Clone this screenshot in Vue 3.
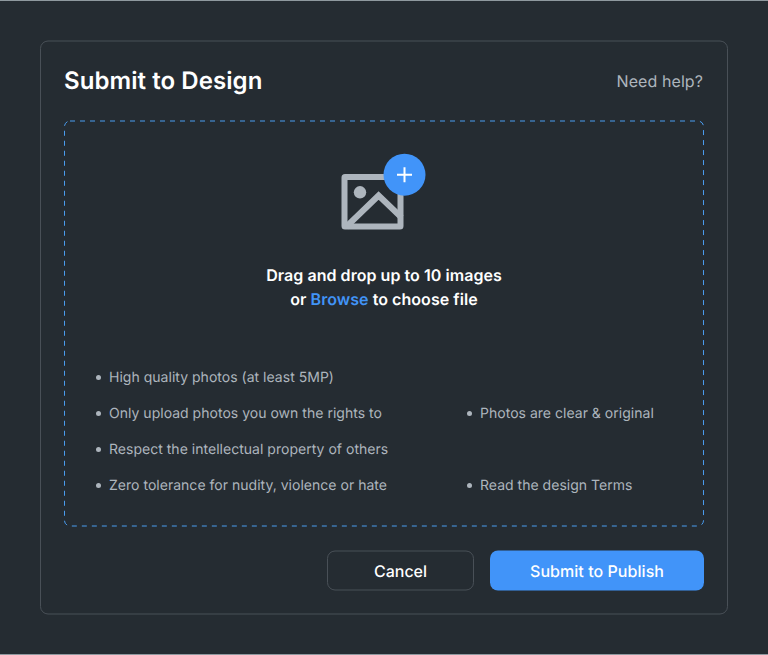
<script setup>
const rules = [
  ['High quality photos (at least 5MP)', ''],
  ['Only upload photos you own the rights to', 'Photos are clear & original'],
  ['Respect the intellectual property of others', ''],
  ['Zero tolerance for nudity, violence or hate', 'Read the design Terms'],
]
</script>

<template>
  <main class="page">
    <section class="card">
      <svg class="outline" width="688" height="575" viewBox="0 0 688 575" aria-hidden="true">
        <rect x="0.5" y="1" width="687" height="573" rx="7.5" fill="none" stroke="#495057" />
      </svg>
      <header class="head">
        <h1 class="title">Submit to Design</h1>
        <a class="help">Need help?</a>
      </header>

      <div class="drop">
        <svg class="outline" width="640" height="407" viewBox="0 0 640 407" aria-hidden="true">
          <rect x="0.5" y="1" width="639" height="405" rx="5.5" fill="none" stroke="#4a9df0" stroke-dasharray="5 5" />
        </svg>
        <svg class="picture" width="86" height="78" viewBox="0 0 86 78" aria-hidden="true">
          <rect x="4.5" y="24" width="56" height="49.5" rx="0.5" fill="none" stroke="#adb5bd" stroke-width="6" />
          <circle cx="20" cy="39.3" r="6.2" fill="#adb5bd" />
          <path d="M6 74L38.6 42.5L61.5 64.5" fill="none" stroke="#adb5bd" stroke-width="6" />
          <circle cx="64.5" cy="21.7" r="21" fill="#4194f9" />
          <path d="M64.5 14.2v15M57 21.7h15" stroke="#fff" stroke-width="2" />
        </svg>
        <p class="prompt">Drag and drop up to 10 images<br />or <a class="browse">Browse</a> to choose file</p>
        <div class="rules">
          <template v-for="(row, i) in rules" :key="i">
            <div v-for="(text, j) in row" :key="j" class="rule">
              <template v-if="text"><i class="dot"></i><span>{{ text }}</span></template>
            </div>
          </template>
        </div>
      </div>

      <footer class="actions">
        <button class="btn cancel">
          <svg class="outline" width="147" height="41" viewBox="0 0 147 41" aria-hidden="true">
            <rect x="0.5" y="1" width="146" height="39" rx="7.5" fill="none" stroke="#495057" />
          </svg>
          <span class="label">Cancel</span>
        </button>
        <button class="btn submit">
          <svg class="outline" width="214" height="41" viewBox="0 0 214 41" aria-hidden="true">
            <rect y="0.5" width="214" height="40" rx="8" fill="#4194f9" />
          </svg>
          <span class="label">Submit to Publish</span>
        </button>
      </footer>
    </section>
  </main>
</template>

<style>
body {
  margin: 0;
  background: #252c32;
}
</style>

<style scoped>
.page {
  box-sizing: border-box;
  width: 768px;
  height: 655px;
  padding: 39px 40px;
  border-top: 1px solid #8f999f;
  border-bottom: 1px solid #8f999f;
  background: #252c32;
  font-family: Inter, sans-serif;
  text-rendering: geometricPrecision;
  color: #fff;
}
.card {
  position: relative;
  box-sizing: border-box;
  height: 575px;
  padding: 24px;
}
.outline {
  position: absolute;
  top: 0;
  left: 0;
  display: block;
}
.head {
  display: flex;
  justify-content: space-between;
  align-items: center;
  height: 33px;
}
.title {
  margin: 0;
  font-size: 24px;
  line-height: 33px;
  font-weight: 600;
  letter-spacing: 0.07px;
}
.help {
  margin-right: 1px;
  font-size: 16px;
  line-height: 24px;
  letter-spacing: 0.08px;
  color: #adb5bd;
}
.drop {
  position: relative;
  box-sizing: border-box;
  height: 407px;
  margin-top: 23px;
  padding-top: 33px;
  display: flex;
  flex-direction: column;
  align-items: center;
}
.picture {
  display: block;
  margin-right: 2px;
}
.prompt {
  margin: 32px 0 0;
  text-align: center;
  font-size: 16px;
  line-height: 24px;
  font-weight: 600;
  letter-spacing: 0.05px;
}
.browse {
  color: #4194f7;
}
.rules {
  align-self: stretch;
  display: grid;
  grid-template-columns: 371px 1fr;
  grid-auto-rows: 24px;
  row-gap: 12px;
  margin: 54px 0 0 32px;
}
.rule {
  display: flex;
  align-items: center;
  gap: 8px;
  font-size: 14px;
  line-height: 25px;
  letter-spacing: 0.02px;
  color: #adb5bd;
}
.dot {
  width: 5px;
  height: 5px;
  border-radius: 50%;
  background: #adb5bd;
}
.actions {
  display: flex;
  justify-content: flex-end;
  gap: 16px;
  margin-top: 23px;
}
.btn {
  position: relative;
  height: 41px;
  padding: 0;
  border: 0;
  background: none;
  color: #fff;
  font: 500 16px/24px Inter, sans-serif;
  text-rendering: geometricPrecision;
}
.cancel {
  width: 147px;
}
.submit {
  width: 214px;
  letter-spacing: 0.05px;
}
.label {
  position: relative;
}
</style>
